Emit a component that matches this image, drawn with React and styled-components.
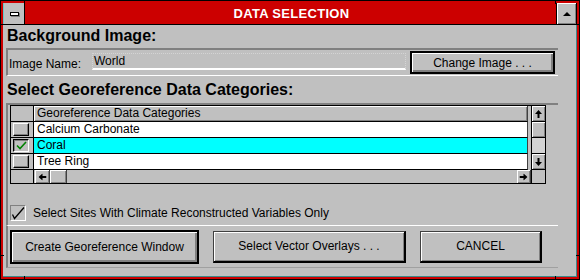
import React from "react";
import styled, { createGlobalStyle } from "styled-components";

const face = "#c0c0c0";

const GlobalStyle = createGlobalStyle`
  html, body {
    margin: 0;
    padding: 0;
    background: #fff;
  }
  body {
    font-family: "Liberation Sans", Arial, sans-serif;
    font-size: 12px;
    color: #000;
  }
  * {
    box-sizing: border-box;
  }
`;

const Window = styled.div`
  position: relative;
  width: 580px;
  height: 280px;
  background: #cc0000;
  border: 1px solid #000;
  padding: 2px;
  display: flex;
  flex-direction: column;
`;

const Tick = styled.div`
  position: absolute;
  background: #000;
  ${({ $h }) => ($h ? "width: 3px; height: 1px;" : "width: 1px; height: 3px;")}
`;

const TitleBar = styled.div`
  height: 22px;
  display: flex;
  border-bottom: 1px solid #000;
`;

const ControlBox = styled.div`
  width: 22px;
  background: ${face};
  border-left: 1px solid #6cc;
  border-right: 1px solid #000;
  display: flex;
  align-items: center;
  justify-content: center;
`;

const Dash = styled.div`
  width: 9px;
  height: 4px;
  background: #fff;
  border: 1px solid #000;
  box-shadow: 1px 1px 0 #808080;
`;

const Title = styled.div`
  flex: 1;
  display: flex;
  align-items: center;
  justify-content: center;
  color: #fff;
  font-weight: bold;
  font-size: 13px;
  letter-spacing: 0.3px;
  padding-left: 2px;
`;

const MaxButton = styled.div`
  width: 21px;
  background: ${face};
  border-left: 1px solid #000;
  border-right: 1px solid #000;
  box-shadow: inset 1px 1px 0 #fff, inset -1px -1px 0 #808080;
  display: flex;
  align-items: center;
  justify-content: center;
`;

const Triangle = styled.div`
  width: 0;
  height: 0;
  border-left: 4px solid transparent;
  border-right: 4px solid transparent;
  border-bottom: 4px solid #000;
`;

const Body = styled.div`
  flex: 1;
  background: ${face};
  border-right: 1px solid #3c8c8c;
  border-bottom: 1px solid #3c8c8c;
  padding-top: 2px;
  display: flex;
  flex-direction: column;
`;

const Heading = styled.div`
  font-weight: bold;
  font-size: 16px;
  line-height: 18px;
  padding-left: 4px;
  margin-top: ${({ $mt }) => $mt || 0}px;
`;

const Frame = styled.div`
  margin: ${({ $mt }) => $mt || 0}px 18px 0 3px;
  border-top: ${({ $noTop }) => ($noTop ? "none" : "2px solid #808080")};
  border-left: 2px solid #808080;
  border-bottom: 1px solid ${({ $bottom }) => $bottom || "#fff"};
  padding-bottom: ${({ $pb }) => $pb || 0}px;
`;

const ImageRow = styled.div`
  height: 25px;
  display: flex;
  align-items: center;
  padding-right: 2px;
`;

const Label = styled.div`
  width: 84px;
  padding-left: 1px;
  margin-top: 2px;
`;

const Field = styled.div`
  width: 314px;
  height: 17px;
  margin-top: -3px;
  border: 1px dotted #d4d4d4;
  border-bottom: 2px solid #fff;
  padding-left: 1px;
  line-height: 14px;
`;

const Button = styled.div`
  width: ${({ $w }) => $w}px;
  height: ${({ $h }) => $h}px;
  margin-left: ${({ $ml }) => $ml || 0}px;
  background: ${face};
  display: flex;
  align-items: center;
  justify-content: center;
  ${({ $default }) =>
    $default
      ? `border: 2px solid #000;
         box-shadow: inset 1px 1px 0 #fff, inset -2px -2px 0 #808080;`
      : `border: 1px solid #404040;
         border-right: 2px solid #000;
         border-bottom: 2px solid #000;
         box-shadow: inset 1px 1px 0 #fff, inset -1px -1px 0 #808080;`}
`;

const Grid = styled.div`
  margin-left: 2px;
  width: 536px;
  border: 1px solid #000;
  background: ${face};
  display: grid;
  grid-template-columns: 23px 1fr 14px;
  grid-template-rows: repeat(4, 16px) 13px;
`;

const RowHead = styled.div`
  border-right: 1px solid #000;
  border-bottom: ${({ $last }) => ($last ? "none" : "1px solid #000")};
  display: flex;
  align-items: center;
  padding-left: 2px;
`;

const RowBox = styled.div`
  width: 16px;
  height: 13px;
  border: 1px solid;
  border-color: ${({ $on }) => ($on ? "#000 #fff #fff #000" : "#fff #000 #000 #fff")};
  box-shadow: ${({ $on }) => ($on ? "inset 1px 1px 0 #808080" : "inset -1px -1px 0 #808080")};
  display: flex;
  align-items: center;
  justify-content: center;
`;

const HeaderCell = styled.div`
  margin-right: 3px;
  border-right: 1px solid #404040;
  border-bottom: 1px solid #000;
  box-shadow: inset 1px 1px 0 #fff, inset -1px -1px 0 #808080;
  padding-left: 3px;
  line-height: 15px;
`;

const DataCell = styled.div`
  margin-right: 3px;
  background: ${({ $selected }) => ($selected ? "#00ffff" : "#fff")};
  border-right: 1px solid #404040;
  border-bottom: 1px solid #000;
  padding-left: 3px;
  line-height: 15px;
`;

const VCell = styled.div`
  border-left: 1px solid #000;
  border-bottom: ${({ $last }) => ($last ? "none" : "1px solid #000")};
  background: ${({ $track }) => ($track ? "#d4d4d4" : face)};
  box-shadow: ${({ $flat }) => ($flat ? "none" : "inset 1px 1px 0 #fff, inset -1px -1px 0 #808080")};
  display: flex;
  align-items: center;
  justify-content: center;
`;

const HScroll = styled.div`
  display: flex;
  padding-left: 1px;
`;

const HPart = styled.div`
  width: ${({ $w }) => ($w ? `${$w}px` : "auto")};
  flex: ${({ $w }) => ($w ? "none" : 1)};
  background: ${face};
  border-right: 1px solid ${({ $flat }) => ($flat ? "transparent" : "#404040")};
  box-shadow: ${({ $flat }) => ($flat ? "none" : "inset 1px 1px 0 #fff, inset -1px -1px 0 #808080")};
  display: flex;
  align-items: center;
  justify-content: center;
`;

const ArrowSvg = styled.svg`
  transform: rotate(${({ $rot }) => $rot}deg);
`;

const Arrow = ({ dir }) => {
  const rot = { up: 0, right: 90, down: 180, left: 270 }[dir];
  return (
    <ArrowSvg $rot={rot} width="7" height="8" viewBox="0 0 7 8">
      <path d="M3.5 0 L7 4 L4.5 4 L4.5 8 L2.5 8 L2.5 4 L0 4 Z" fill="#000" />
    </ArrowSvg>
  );
};

const CheckRow = styled.div`
  margin-top: 21px;
  height: 16px;
  padding-left: 2px;
  display: flex;
  align-items: center;
`;

const CheckBox = styled.div`
  width: 16px;
  height: 16px;
  border: 1px solid;
  border-color: #808080 #fff #fff #808080;
  display: flex;
  align-items: center;
  justify-content: center;
`;

const CheckLabel = styled.div`
  margin-left: 7px;
`;

const ButtonRow = styled.div`
  height: 41px;
  display: flex;
  align-items: center;
  padding-left: 2px;
`;

const rows = [
  { name: "Calcium Carbonate", on: false },
  { name: "Coral", on: true },
  { name: "Tree Ring", on: false },
];

export default function App() {
  return (
    <>
      <GlobalStyle />
      <Window>
        <Tick style={{ left: 23, top: 0 }} />
        <Tick style={{ left: 554, top: 0 }} />
        <Tick style={{ left: 23, bottom: 0 }} />
        <Tick style={{ left: 554, bottom: 0 }} />
        <Tick $h style={{ left: 0, top: 23 }} />
        <Tick $h style={{ right: 0, top: 23 }} />
        <Tick $h style={{ left: 0, top: 254 }} />
        <Tick $h style={{ right: 0, top: 254 }} />
        <TitleBar>
          <ControlBox>
            <Dash />
          </ControlBox>
          <Title>DATA SELECTION</Title>
          <MaxButton>
            <Triangle />
          </MaxButton>
        </TitleBar>
        <Body>
          <Heading>Background Image:</Heading>
          <Frame $mt={3}>
            <ImageRow>
              <Label>Image Name:</Label>
              <Field>World</Field>
              <Button $default $w={145} $h={23} $ml={4}>
                Change Image . . .
              </Button>
            </ImageRow>
          </Frame>
          <Heading $mt={5}>Select Georeference Data Categories:</Heading>
          <Frame $mt={4} $pb={4}>
            <Grid>
              <RowHead />
              <HeaderCell>Georeference Data Categories</HeaderCell>
              <VCell>
                <Arrow dir="up" />
              </VCell>
              {rows.map((r, i) => (
                <React.Fragment key={r.name}>
                  <RowHead>
                    <RowBox $on={r.on}>
                      {r.on && (
                        <svg width="11" height="9" viewBox="0 0 11 9">
                          <path d="M1 4.5 L4 7.5 L10 1" stroke="#008000" strokeWidth="1.6" fill="none" />
                        </svg>
                      )}
                    </RowBox>
                  </RowHead>
                  <DataCell $selected={r.on}>{r.name}</DataCell>
                  {i === 0 && <VCell />}
                  {i === 1 && <VCell $track $flat />}
                  {i === 2 && (
                    <VCell>
                      <Arrow dir="down" />
                    </VCell>
                  )}
                </React.Fragment>
              ))}
              <RowHead $last />
              <HScroll>
                <HPart $w={15}>
                  <Arrow dir="left" />
                </HPart>
                <HPart $w={17} />
                <HPart $flat />
                <HPart $w={14}>
                  <Arrow dir="right" />
                </HPart>
              </HScroll>
              <VCell $last $flat />
            </Grid>
            <CheckRow>
              <CheckBox>
                <svg width="14" height="14" viewBox="0 0 14 14">
                  <path d="M1.5 8.5 L3.5 12.5 L13 1.5" stroke="#000" strokeWidth="1.3" fill="none" />
                </svg>
              </CheckBox>
              <CheckLabel>Select Sites With Climate Reconstructed Variables Only</CheckLabel>
            </CheckRow>
          </Frame>
          <Frame $noTop $bottom="#a0a0a0">
            <ButtonRow>
              <Button $default $w={189} $h={34}>
                Create Georeference Window
              </Button>
              <Button $w={193} $h={32} $ml={14}>
                Select Vector Overlays . . .
              </Button>
              <Button $w={122} $h={32} $ml={14}>
                CANCEL
              </Button>
            </ButtonRow>
          </Frame>
        </Body>
      </Window>
    </>
  );
}
